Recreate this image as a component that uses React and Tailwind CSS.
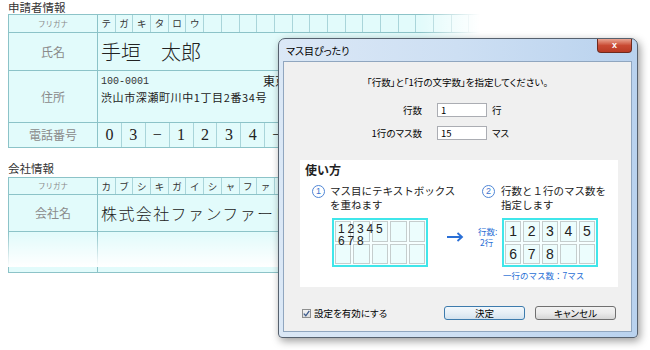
const applicantKana = ['テ', 'ガ', 'キ', 'タ', 'ロ', 'ウ'];
const companyKana = ['カ', 'ブ', 'シ', 'キ', 'ガ', 'イ', 'シ', 'ャ', 'フ', 'ァ', 'ン', 'フ', 'ァ', 'ー', 'レ'];
const phone = ['0', '3', '−', '1', '2', '3', '4', '−', '5', '6', '7', '8', '9', ''];

function Label({ children, small }) {
  return (
    <div
      className={`flex w-[89px] shrink-0 items-center justify-center border-r border-[#8cc3c8] text-[#8a8a8a] ${
        small ? 'text-[7.5px]' : 'text-[12px]'
      }`}
    >
      {children}
    </div>
  );
}

function KanaCells({ chars }) {
  return (
    <div className="flex">
      {Array.from({ length: 22 }).map((_, i) => (
        <div
          key={i}
          className="flex h-full w-[17.7px] shrink-0 items-center justify-center border-r border-[#a9d5da] text-[9.5px] text-[#333]"
        >
          {chars[i] || ''}
        </div>
      ))}
    </div>
  );
}

function MasuGrid({ digits, children }) {
  return (
    <div className="relative grid h-[49px] w-[96px] shrink-0 grid-cols-5 grid-rows-2 gap-[2px] border-2 border-[#3fe6ea] bg-[#f6ffff] p-[1px]">
      {Array.from({ length: 10 }).map((_, i) => (
        <div
          key={i}
          className="flex items-center justify-center border border-[#c5cdcd] bg-[#ecfdfd] font-['Liberation_Sans',sans-serif] text-[14px] leading-none text-[#222]"
        >
          {digits ? digits[i] : ''}
        </div>
      ))}
      {children}
    </div>
  );
}

function Circled({ n }) {
  return (
    <span className="mt-[1px] flex h-[13px] w-[13px] shrink-0 items-center justify-center rounded-full border border-[#4f86d6] font-['Liberation_Sans',sans-serif] text-[9px] leading-none text-[#3c75cf]">
      {n}
    </span>
  );
}

export default function App() {
  return (
    <div className="relative h-[350px] w-[650px] overflow-hidden bg-white font-['Noto_Sans_CJK_JP',sans-serif] text-[#333]">
      {/* background form */}
      <div className="w-[490px] pl-2">
        <div className="h-[14px] text-[11.5px] leading-[14px] text-[#333]">申請者情報</div>
        <div className="border border-[#8cc3c8] bg-[#e2fbfb]">
          <div className="flex h-[18px] border-b border-[#8cc3c8]">
            <Label small>フリガナ</Label>
            <KanaCells chars={applicantKana} />
          </div>
          <div className="flex h-[38px] border-b border-[#8cc3c8]">
            <Label>氏名</Label>
            <div className="flex items-center pl-[3px] text-[20px] font-light text-[#222]">手垣　太郎</div>
          </div>
          <div className="flex h-[52px] border-b border-[#8cc3c8]">
            <Label>住所</Label>
            <div className="flex flex-col pl-[3px] pt-[4px]">
              <div className="flex h-[13px] items-end">
                <span className="font-['Liberation_Mono',monospace] text-[10px] leading-[12px] text-[#333]">100-0001</span>
                <span className="ml-[114px] text-[12px] leading-[14px] text-[#222]">東京都千代田区</span>
              </div>
              <div className="mt-[2px] whitespace-nowrap text-[11px] leading-[14px] tracking-[0.6px] text-[#222]">
                渋山市深瀬町川中1丁目2番34号
              </div>
            </div>
          </div>
          <div className="flex h-[24px]">
            <Label>電話番号</Label>
            <div className="flex">
              {phone.map((d, i) => (
                <div
                  key={i}
                  className="flex h-full w-[23.9px] shrink-0 items-center justify-center border-r border-[#a9d5da] font-['Liberation_Serif',serif] text-[16px] text-[#222]"
                >
                  {d}
                </div>
              ))}
            </div>
          </div>
        </div>

        <div className="mt-[14px] h-[12px] text-[11.5px] leading-[12px] text-[#333]">会社情報</div>
        <div className="mt-[3px] border border-[#8cc3c8] bg-[#e2fbfb]">
          <div className="flex h-[17px] border-b border-[#8cc3c8]">
            <Label small>フリガナ</Label>
            <KanaCells chars={companyKana} />
          </div>
          <div className="flex h-[37px] border-b border-[#8cc3c8]">
            <Label>会社名</Label>
            <div className="flex items-center whitespace-nowrap pl-[3px] text-[16px] font-light tracking-[1.4px] text-[#222]">
              株式会社ファンファーレ
            </div>
          </div>
          <div className="flex h-[40px]">
            <Label />
          </div>
        </div>
      </div>

      {/* fades */}
      <div className="absolute left-[420px] top-0 h-[350px] w-[80px] bg-linear-to-r from-white/0 to-white to-75%" />
      <div className="absolute left-0 top-[233px] h-[34px] w-[500px] bg-linear-to-b from-white/0 to-white" />

      {/* dialog */}
      <div className="absolute left-[278px] top-[38px] flex h-[300px] w-[360px] flex-col rounded-t-[7px] rounded-b-[4px] border border-[#56616e] bg-linear-to-r from-[#dbe8f6] via-[#cddff3] to-[#b9d2ee] text-[9.5px] text-black shadow-[2px_3px_8px_rgba(0,0,0,0.4)] [font-feature-settings:'palt']">
        <div className="relative flex h-[22px] shrink-0 items-center pl-[7px] text-[10px]">
          マス目ぴったり
          <div className="absolute right-[5px] top-0 flex h-[14px] w-[35px] items-center justify-center rounded-b-[4px] border border-t-0 border-[#6e2a1e] bg-linear-to-b from-[#e9a593] via-[#c94a33] to-[#b93b25] font-['Liberation_Sans',sans-serif] text-[9px] font-bold leading-none text-white">
            x
          </div>
        </div>

        <div className="flex flex-1 flex-col pb-[5px] pl-[4px] pr-[5px]">
          <div className="flex flex-1 flex-col border border-[#90a6bf] bg-[#f0f0f0]">
            <p className="mt-[14px] text-center leading-[12px]">「行数」と「1行の文字数」を指定してください。</p>

            <div className="mt-[15px] flex h-[14px] items-center">
              <span className="w-[138px] text-right">行数</span>
              <div className="ml-[15px] h-[14px] w-[50px] border border-[#abadb3] bg-white pl-[3px] leading-[12px]">1</div>
              <span className="ml-[5px]">行</span>
            </div>
            <div className="mt-[9px] flex h-[14px] items-center">
              <span className="w-[138px] text-right">1行のマス数</span>
              <div className="ml-[15px] h-[14px] w-[50px] border border-[#abadb3] bg-white pl-[3px] leading-[12px]">15</div>
              <span className="ml-[5px]">マス</span>
            </div>

            {/* usage panel */}
            <div className="ml-[16px] mt-[20px] h-[127px] w-[318px] bg-white px-[5px] pt-[3px] text-[#222] [font-feature-settings:normal]">
              <div className="text-[12px] font-bold leading-[14px]">使い方</div>
              <div className="mt-[7px] flex">
                <div className="ml-[7px] flex w-[170px] shrink-0">
                  <Circled n="1" />
                  <div className="ml-[5px] text-[10.5px] leading-[14px]">
                    マス目にテキストボックス
                    <br />
                    を重ねます
                  </div>
                </div>
                <div className="flex">
                  <Circled n="2" />
                  <div className="ml-[6px] text-[10.5px] leading-[14px]">
                    行数と１行のマス数を
                    <br />
                    指定します
                  </div>
                </div>
              </div>

              <div className="mt-[6px] flex items-start">
                <div className="ml-[27px]">
                  <MasuGrid>
                    <div className="absolute left-[4px] top-[3px] font-['Liberation_Sans',sans-serif] text-[12px] leading-[12px] tracking-[2.8px] text-[#222]">
                      12345
                      <br />
                      678
                    </div>
                  </MasuGrid>
                </div>
                <svg className="ml-[19px] mt-[14px]" width="17" height="10" viewBox="0 0 17 10">
                  <path d="M0 5H15M10.5 1L15 5L10.5 9" fill="none" stroke="#2a6fd6" strokeWidth="1.8" />
                </svg>
                <div className="ml-[14px] mt-[8px] w-[24px] text-[8.5px] leading-[11px] text-[#2a6fd6]">
                  行数:
                  <br />
                  <span className="ml-[2px]">2行</span>
                </div>
                <div className="flex flex-col">
                  <MasuGrid digits={['1', '2', '3', '4', '5', '6', '7', '8', '', '']} />
                  <div className="mt-[3px] pl-[1px] text-[8.5px] leading-[10px] text-[#2a6fd6]">一行のマス数：7マス</div>
                </div>
              </div>
            </div>

            {/* bottom row */}
            <div className="mt-[19px] flex h-[14px] items-center">
              <div className="flex w-[160px] shrink-0 items-center">
                <div className="ml-[18px] flex h-[9px] w-[9px] items-center justify-center border border-[#8e8f8f] bg-linear-to-b from-[#f4f4f4] to-[#dcdcdc]">
                  <svg width="7" height="7" viewBox="0 0 7 7">
                    <path d="M0.8 3.6L2.8 5.8L6.3 0.8" fill="none" stroke="#3b5a8c" strokeWidth="1.3" />
                  </svg>
                </div>
                <span className="ml-[3px]">設定を有効にする</span>
              </div>
              <div className="flex h-[14px] w-[81px] items-center justify-center rounded-[3px] border border-[#3d7bad] bg-linear-to-b from-[#f2f8fc] via-[#e6eff6] to-[#d3e2ee]">
                決定
              </div>
              <div className="ml-[10px] flex h-[14px] w-[81px] items-center justify-center rounded-[3px] border border-[#707070] bg-linear-to-b from-[#f2f2f2] via-[#ebebeb] to-[#d6d6d6]">
                キャンセル
              </div>
            </div>
          </div>
        </div>
      </div>
    </div>
  );
}
